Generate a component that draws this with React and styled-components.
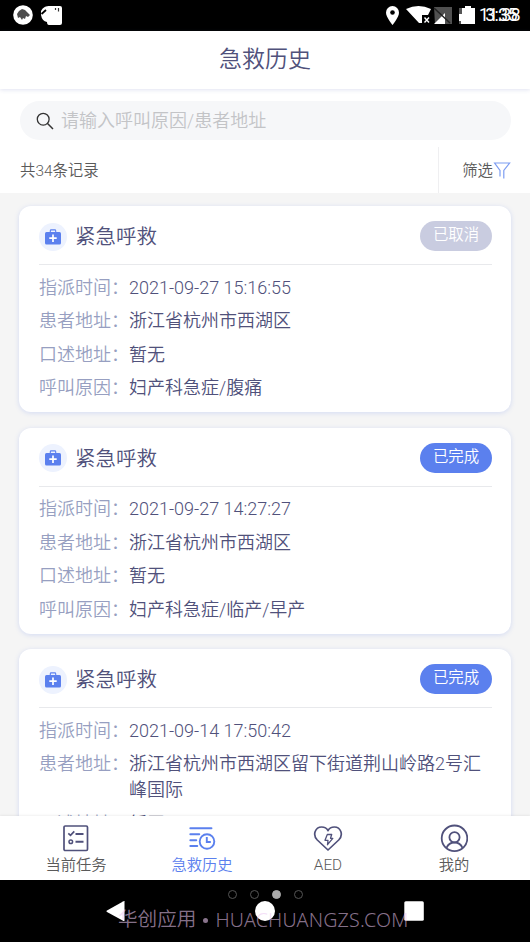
import React from 'react'
import styled, { createGlobalStyle } from 'styled-components';

const records = [
    {
        status: '已取消',
        cancelled: true,
        time: '2021-09-27 15:16:55',
        address: '浙江省杭州市西湖区',
        spoken: '暂无',
        reason: '妇产科急症/腹痛',
    },
    {
        status: '已完成',
        time: '2021-09-27 14:27:27',
        address: '浙江省杭州市西湖区',
        spoken: '暂无',
        reason: '妇产科急症/临产/早产',
    },
    {
        status: '已完成',
        time: '2021-09-14 17:50:42',
        address: '浙江省杭州市西湖区留下街道荆山岭路2号汇峰国际',
        spoken: '暂无',
        reason: '妇产科急症/腹痛',
    },
];

const tabs = [
    { label: '当前任务', Icon: TaskIcon },
    { label: '急救历史', Icon: HistoryIcon, active: true },
    { label: 'AED', Icon: HeartIcon },
    { label: '我的', Icon: UserIcon },
];

export default function App() {
    return (
        <Screen lang="zh-CN">
            <GlobalStyle />
            <StatusBar />
            <Header>急救历史</Header>
            <Toolbar>
                <SearchBox>
                    <SearchIcon />
                    <span>请输入呼叫原因/患者地址</span>
                </SearchBox>
                <FilterRow>
                    <Count>共34条记录</Count>
                    <FilterButton>
                        <span>筛选</span>
                        <FilterIcon />
                    </FilterButton>
                </FilterRow>
            </Toolbar>
            <List>
                {records.map((r, index) => (
                    <Record key={index} record={r} />
                ))}
            </List>
            <TabBar>
                {tabs.map(({ label, Icon, active }) => (
                    <Tab key={label} $active={active}>
                        <Icon />
                        <span>{label}</span>
                    </Tab>
                ))}
            </TabBar>
            <SystemNav />
        </Screen>
    )
}

function Record({ record }) {
    return (
        <Card>
            <CardHead>
                <IconCircle>
                    <KitIcon />
                </IconCircle>
                <CardTitle>紧急呼救</CardTitle>
                <Status $cancelled={record.cancelled}>{record.status}</Status>
            </CardHead>
            <Fields>
                <Label>指派时间：</Label>
                <Value>{record.time}</Value>
                <Label>患者地址：</Label>
                <Value>{record.address}</Value>
                <Label>口述地址：</Label>
                <Value>{record.spoken}</Value>
                <Label>呼叫原因：</Label>
                <Value>{record.reason}</Value>
            </Fields>
        </Card>
    )
}

function StatusBar() {
    return (
        <StatusWrapper>
            <svg width="50" height="22" viewBox="0 0 50 22">
                <circle cx="10" cy="11" r="9.8" fill="#fff" />
                <path d="M4 10l2-3 3-2 3 1 5 5-2 2-2-1-1 3-2-1-1 2-2-3-2 1z" fill="#4b4b4b" />
                <path d="M28 7c2-4 5-5 9-5h10q2 0 2 2v15q0 2-2 2H36q-2 0-2-3-5-1-6-7z" fill="#fff" />
                <path d="M28.500 10l4.500-4" stroke="#000" strokeWidth="1.800" />
                <path d="M42.500 4v2M45.500 4v3.500" stroke="#333" strokeWidth="1.200" />
            </svg>
            <StatusRight>
                <svg width="92" height="22" viewBox="384 5 92 22">
                    <path d="M392.500 6a6.500 6.500 0 0 0-6.500 6.500c0 4.800 6.500 12.500 6.500 12.500s6.500-7.700 6.500-12.500a6.500 6.500 0 0 0-6.500-6.500z" fill="#fff" />
                    <circle cx="392.500" cy="12.500" r="2.300" fill="#000" />
                    <path d="M406 9q12.500-6 25 0l-3 6h-6v8h-3z" fill="#fff" />
                    <path d="M424.500 17.500l4.500 5m0-5l-4.500 5" stroke="#fff" strokeWidth="1.400" />
                    <path d="M434 7h18v17h-17z" fill="#505050" />
                    <path d="M434 24l11-11v11z" fill="#fff" />
                    <path d="M434 8l16 15" stroke="#222" strokeWidth="1.500" />
                    <path d="M459 8h4v16h-4z" fill="#555" />
                    <path d="M462 8h3v-2h6v2h4v16h-14v-3h-2v-7h3z" fill="#fff" />
                </svg>
                <Clock>
                    <span>11:38</span>
                    <ClockGhost>3:35</ClockGhost>
                </Clock>
            </StatusRight>
        </StatusWrapper>
    )
}

function SystemNav() {
    return (
        <NavWrapper>
            <Dots>
                <Dot />
                <Dot />
                <Dot $filled />
                <Dot />
            </Dots>
            <NavButtons>
                <svg width="20" height="20" viewBox="0 0 20 20">
                    <path d="M18.500 .5v19q0 1-1 .5L1 11q-1-.8 0-1.500L17.500 .200q1-.4 1 .3z" fill="#fff" />
                </svg>
                <svg width="20" height="20" viewBox="0 0 20 20">
                    <circle cx="10" cy="10" r="10" fill="#fff" />
                </svg>
                <svg width="20" height="20" viewBox="0 0 20 20">
                    <rect x=".3" y=".3" width="19.500" height="19.500" rx="1.500" fill="#fff" />
                </svg>
            </NavButtons>
            <Watermark>
                <span>华创应用</span>
                <i />
                <Domain>HUACHUANGZS.COM</Domain>
            </Watermark>
        </NavWrapper>
    )
}

function SearchIcon() {
    return (
        <svg width="18" height="18" viewBox="0 0 18 18" fill="none" stroke="#333" strokeWidth="1.300">
            <circle cx="7.200" cy="7.200" r="5.900" />
            <path d="M11.300 11.300l5.700 5.700" strokeWidth="1.500" />
        </svg>
    )
}

function FilterIcon() {
    return (
        <svg width="18" height="18" viewBox="0 0 18 18" fill="none" stroke="#7d9df2" strokeWidth="1.200">
            <path d="M7 15.500V9.500L1.600 2h15L10.800 9.500V17.500" />
        </svg>
    )
}

function KitIcon() {
    return (
        <svg width="16" height="16" viewBox="0 0 16 16">
            <path d="M5.300 4V1.800q0-.9.900-.9h3.600q.9 0 .9.900V4" fill="none" stroke="#5b80ee" strokeWidth="1.100" />
            <rect x="0" y="3" width="16" height="12.500" rx="1.500" fill="#5b80ee" />
            <path d="M8 5.500v7.400M4.300 9.200h7.400" stroke="#fff" strokeWidth="1.700" />
        </svg>
    )
}

function TaskIcon() {
    return (
        <svg width="28" height="28" viewBox="0 0 28 28" fill="none" stroke="#50517b" strokeWidth="1.700">
            <rect x="2" y="2" width="23.500" height="24.500" rx="1.200" />
            <path d="M6.300 9.300l2.200 2 3.800-4" />
            <path d="M13.500 10h8M13.500 17.800h8" strokeWidth="2" />
            <circle cx="8.800" cy="17.800" r="1.800" strokeWidth="1.500" />
        </svg>
    )
}

function HistoryIcon() {
    return (
        <svg width="28" height="28" viewBox="0 0 28 28" fill="none" stroke="#5b80ee" strokeWidth="1.900" strokeLinecap="round">
            <path d="M2.300 4.300h21.200M2.300 10.300h9M2.300 16.300h6M2.300 22h7" />
            <circle cx="19" cy="17.500" r="7.300" />
            <path d="M18.800 13v5h4" strokeLinecap="butt" />
        </svg>
    )
}

function HeartIcon() {
    return (
        <svg width="30" height="28" viewBox="0 0 30 28" fill="none" stroke="#50517b" strokeWidth="1.700" strokeLinejoin="round">
            <path d="M15 26L4.300 16C-.8 10.800 2.300 3 8.600 3c3 0 5.200 1.300 6.400 3.700C16.200 4.300 18.400 3 21.400 3c6.300 0 9.400 7.800 4.300 13z" />
            <path d="M14.300 10.500h4.400l-1.200 3.800h2.300l-5.300 6.400.5-4.400h-3z" strokeWidth="1.300" />
        </svg>
    )
}

function UserIcon() {
    return (
        <svg width="28" height="28" viewBox="0 0 28 28" fill="none" stroke="#50517b" strokeWidth="1.800">
            <circle cx="14.500" cy="14.300" r="12.800" />
            <circle cx="14.500" cy="13.300" r="5.100" />
            <path d="M6.500 23.800c1.500-3.500 4.300-5.300 8-5.300s6.500 1.800 8 5.300" />
        </svg>
    )
}

const GlobalStyle = createGlobalStyle`
    body {
        margin: 0;
        font-family: Roboto, "Noto Sans CJK SC DemiLight", "Noto Sans CJK SC Light", "Noto Sans CJK SC", sans-serif;
        font-weight: 350;
        overflow: hidden;
    }
    * {
        box-sizing: border-box;
    }
    svg {
        display: block;
        flex-shrink: 0;
    }
`;

const Screen = styled.div`
    display: flex;
    flex-direction: column;
    width: 530px;
    height: 942px;
    overflow: hidden;
    background: #f5f5f5;
`;

const StatusWrapper = styled.div`
    display: flex;
    justify-content: space-between;
    flex-shrink: 0;
    height: 31px;
    padding: 4px 9px 0 13px;
    background: #000;
`;

const StatusRight = styled.div`
    display: flex;
    gap: 3px;
    padding-top: 1px;
`;

const Clock = styled.div`
    position: relative;
    width: 42px;
    color: #fff;
    font-size: 17.5px;
    font-weight: 400;
    line-height: 21px;
    letter-spacing: -0.5px;
`;

const ClockGhost = styled.span`
    position: absolute;
    top: 0;
    right: 4px;
`;

const Header = styled.div`
    display: flex;
    align-items: center;
    justify-content: center;
    flex-shrink: 0;
    height: 58px;
    padding-bottom: 6px;
    background: #fff;
    color: #50517b;
    font-size: 23px;
    box-shadow: 0 1px 4px rgba(90, 100, 180, 0.18);
    z-index: 1;
`;

const Toolbar = styled.div`
    flex-shrink: 0;
    height: 104px;
    padding: 12px 19px 0 20px;
    background: #fff;
`;

const SearchBox = styled.div`
    display: flex;
    align-items: center;
    gap: 7px;
    height: 39px;
    padding-left: 16px;
    border-radius: 20px;
    background: #f6f7f9;
    color: #c3c4c7;
    font-size: 18px;

    span {
        padding-bottom: 4px;
    }
`;

const FilterRow = styled.div`
    display: flex;
    align-items: center;
    justify-content: space-between;
    height: 46px;
    margin-top: 7px;
    color: #5a5a5a;
    font-size: 15.4px;
`;

const Count = styled.div`
    padding-bottom: 3px;
`;

const FilterButton = styled.div`
    display: flex;
    align-items: center;
    height: 46px;
    padding-left: 23px;
    border-left: 1px solid #efeff1;

    span {
        padding-bottom: 3px;
    }
`;

const List = styled.div`
    display: flex;
    flex-direction: column;
    gap: 15.5px;
    height: 623px;
    padding: 13px 19px 0;
    overflow: hidden;
`;

const Card = styled.div`
    flex-shrink: 0;
    padding: 0 19px 11px 20px;
    border-radius: 12px;
    background: #fff;
    box-shadow: 0 1px 5px rgba(91, 128, 238, 0.22);
`;

const CardHead = styled.div`
    display: flex;
    align-items: center;
    height: 59px;
    border-bottom: 1px solid #e8e9ec;
`;

const IconCircle = styled.div`
    display: flex;
    align-items: center;
    justify-content: center;
    width: 28px;
    height: 28px;
    margin-top: 3px;
    border-radius: 50%;
    background: #edf2fe;
`;

const CardTitle = styled.div`
    flex: 1;
    padding-left: 8px;
    color: #50517b;
    font-size: 20.5px;
`;

const Status = styled.div`
    width: 72px;
    height: 30px;
    margin-top: 2px;
    border-radius: 15px;
    background: ${props => props.$cancelled ? '#c9cce0' : '#5b80ee'};
    color: #fff;
    font-size: 15.4px;
    line-height: 28px;
    text-align: center;
`;

const Fields = styled.div`
    display: grid;
    grid-template-columns: 90px 1fr;
    row-gap: 7.5px;
    padding-top: 9.5px;
    font-size: 18px;
    line-height: 26px;
`;

const Label = styled.div`
    color: #979fc1;
    white-space: nowrap;
`;

const Value = styled.div`
    color: #50517b;
`;

const TabBar = styled.div`
    display: flex;
    flex-shrink: 0;
    height: 64px;
    padding: 0 13px;
    background: #fff;
    box-shadow: 0 -1px 2px rgba(0, 0, 0, 0.06);
    z-index: 1;
`;

const Tab = styled.div`
    display: flex;
    flex: 1;
    flex-direction: column;
    align-items: center;
    padding-top: 8px;
    color: ${props => props.$active ? '#5b80ee' : '#5a5a5a'};
    font-size: 15.3px;
    line-height: 26px;
`;

const NavWrapper = styled.div`
    position: relative;
    flex-shrink: 0;
    height: 62px;
    background: #000;
`;

const Dots = styled.div`
    display: flex;
    justify-content: center;
    gap: 13px;
    padding-top: 10px;
`;

const Dot = styled.div`
    width: 9px;
    height: 9px;
    border: 1px solid ${props => props.$filled ? '#aaa' : '#555'};
    border-radius: 50%;
    background: ${props => props.$filled ? '#aaa' : 'transparent'};
`;

const NavButtons = styled.div`
    display: flex;
    justify-content: space-between;
    padding: 2px 106px;
`;

const Watermark = styled.div`
    position: absolute;
    left: 118px;
    top: 27px;
    display: flex;
    align-items: center;
    color: rgba(236, 200, 242, 0.58);
    font-size: 19.6px;
    line-height: 26px;
    white-space: nowrap;

    i {
        width: 5px;
        height: 5px;
        margin: 0 7px;
        border-radius: 50%;
        background: currentColor;
    }
`;

const Domain = styled.span`
    font-family: "Noto Sans", sans-serif;
    font-size: 19.6px;
    font-weight: 300;
    letter-spacing: 0.2px;
`;
